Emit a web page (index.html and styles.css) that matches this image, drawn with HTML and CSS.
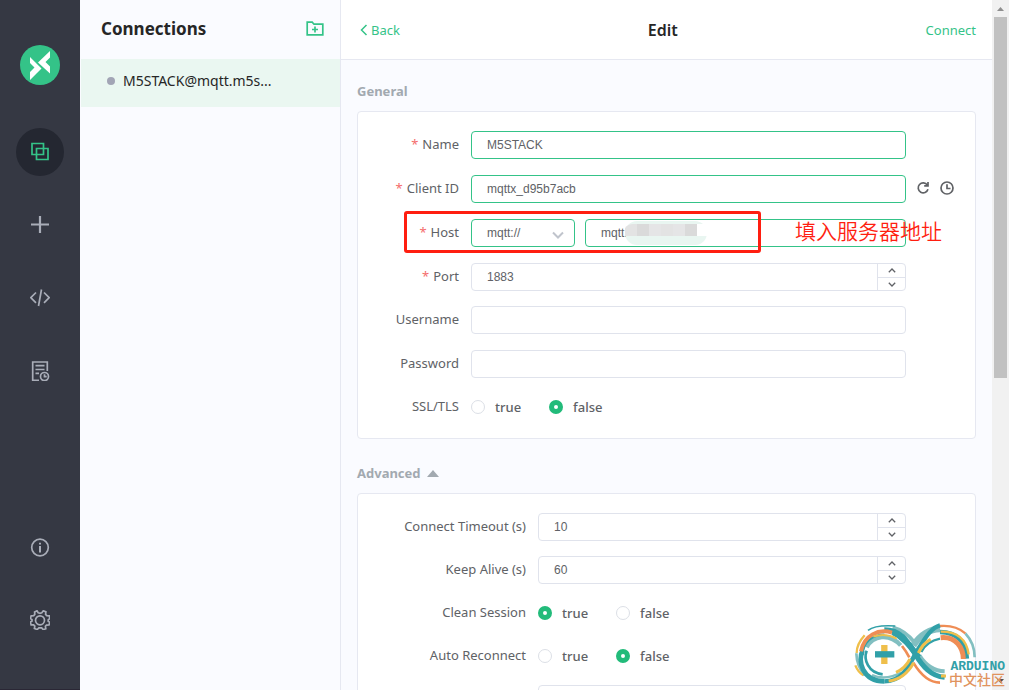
FILE: index.html
```html
<!DOCTYPE html>
<html lang="en">
<head>
<meta charset="utf-8">
<title>Edit connection</title>
<link rel="stylesheet" href="styles.css">
</head>
<body>
<div class="app">
  <nav class="rail" aria-label="Main">
    <svg class="logo" viewBox="0 0 40 40" aria-hidden="true"><circle cx="20" cy="20" r="20" fill="#34c388"/><path d="M10 12 21.500 23.500 10 35V27L14.500 22.500 10 18zM30 6 18 17.500 30 28.500V21.500L25.500 17 30 12.500z" fill="#fff"/></svg>
    <a class="rail-item active" href="#connections" aria-label="Connections"><svg viewBox="0 0 20 20"><path d="M2 1.500h11.500v11H2zM6.500 6.500H18v11H6.500z"/></svg></a>
    <a class="rail-item" href="#new" aria-label="New"><svg viewBox="0 0 20 20"><path d="M10 1v17M1 9.500h18" stroke-width="2.200"/></svg></a>
    <a class="rail-item" href="#script" aria-label="Script"><svg viewBox="0 0 20 20"><path d="M6 4.500.8 9.700 6 14.900M14 4.500l5.200 5.200L14 14.900M11.500 1.500 8.500 18"/></svg></a>
    <a class="rail-item" href="#log" aria-label="Log"><svg viewBox="0 0 20 20"><path d="M17.300 10V1H2.700v18.300H9M5.500 4.700h9M5.500 8.500h9M5.500 12.300H9"/><circle cx="14.500" cy="15.500" r="4"/><path d="M14.500 13.200v2.500h2.200"/></svg></a>
    <a class="rail-item push" href="#about" aria-label="About"><svg viewBox="0 0 20 20"><circle cx="10" cy="10.500" r="8.300"/><path d="M10 9V15.500M10 5.700v1.800" stroke-width="2"/></svg></a>
    <a class="rail-item" href="#settings" aria-label="Settings"><svg viewBox="0 0 20 20"><circle cx="10" cy="10.300" r="4.500"/><path d="M8.2 2.800 10 3.400l1.800-.6L13.300.8l2.600 1.100-.3 2.500 1.200 1.300 2.500.2.500 2.600-1.600 1.300v1.400l1.600 1.200-.8 2.600-2.500.1-1.100 1.200.4 2.400-2.500 1-1.600-1.800h-2.800L7.200 19.500l-2.800-1 .4-2.400-1.200-1.200-2.500-.1-.8-2.600 1.700-1.200V9.600L.4 8.400l.8-2.600 2.500-.2 1.100-1.200-.2-2.500L7 .8z"/></svg></a>
  </nav>

  <aside class="connections">
    <header class="bar">
      <h1>Connections</h1>
      <button class="plain" type="button" aria-label="New group"><svg class="folder" viewBox="0 0 18 16"><path d="M1.200 13.800V1.200h5l1.800 2h8.800v10.600zM9 5.500v6M6 8.500h6"/></svg></button>
    </header>
    <a class="connection" href="#m5stack"><span class="dot"></span><span>M5STACK@mqtt.m5s...</span></a>
  </aside>

  <main class="editor">
    <header class="bar editor-bar">
      <a class="back" href="#back"><svg viewBox="0 0 8 12"><path d="M6.500 1 1.500 6l5 5"/></svg>Back</a>
      <h2>Edit</h2>
      <button class="plain connect" type="button">Connect</button>
    </header>
    <form class="content">
      <h3>General</h3>
      <section class="card">
        <div class="row text-row">
          <label class="required" for="name">Name</label>
          <input class="box valid" id="name" value="M5STACK">
        </div>
        <div class="row text-row">
          <label class="required" for="client">Client ID</label>
          <input class="box valid" id="client" value="mqttx_d95b7acb">
          <div class="tools">
            <button class="plain" type="button" aria-label="Refresh"><svg viewBox="0 0 14 14"><path d="M11.300 4A5 5 0 1 0 12 8.300M12 1v3.800H8.200"/></svg></button>
            <button class="plain" type="button" aria-label="Timestamp"><svg viewBox="0 0 14 14"><circle cx="7" cy="7" r="6"/><path d="M7 3.200V7.500h3.500"/></svg></button>
          </div>
        </div>
        <div class="row text-row">
          <label class="required" for="host">Host</label>
          <div class="host">
            <div class="select">
              <select class="box valid" aria-label="Protocol"><option>mqtt://</option></select>
              <svg viewBox="0 0 12 8"><path d="M1 1.500 6 6.500l5-5"/></svg>
            </div>
            <div class="address">
              <input class="box valid" id="host" value="mqtt.">
              <svg class="mask" viewBox="0 0 82 24" aria-hidden="true"><rect width="82" height="24" rx="12" fill="#e9f6f1"/><path d="M72 3h10v12H72z" fill="#fff"/><path d="M0 14V7Q3 3 8 3h64v12H0z" fill="#e3e3e3"/><path d="M12 3h12v12H12zM60 3h12v12H60z" fill="#dadada"/><path d="M24 3h12v12H24zM48 3h12v12H48z" fill="#e5e5e6"/></svg>
            </div>
          </div>
          <div class="frame"></div>
          <p class="note" lang="zh">填入服务器地址</p>
        </div>
        <div class="row">
          <label class="required" for="port">Port</label>
          <div class="number"><input class="box" id="port" inputmode="numeric" value="1883"><div class="steps"><button type="button" aria-label="Increase"><svg viewBox="0 0 8 5"><path d="M.8 4.200 4 1l3.200 3.200"/></svg></button><button type="button" aria-label="Decrease"><svg viewBox="0 0 8 5"><path d="M.8.8 4 4 7.200.8"/></svg></button></div></div>
        </div>
        <div class="row text-row">
          <label for="user">Username</label>
          <input class="box" id="user">
        </div>
        <div class="row">
          <label for="pass">Password</label>
          <input class="box" id="pass" type="password">
        </div>
        <div class="row">
          <span class="label">SSL/TLS</span>
          <div class="radios"><label><input type="radio" name="ssl">true</label><label><input type="radio" name="ssl" checked>false</label></div>
        </div>
      </section>

      <h3>Advanced <svg class="caret" viewBox="0 0 12 7"><path d="M6 0 12 7H0z"/></svg></h3>
      <section class="card advanced">
        <div class="row">
          <label for="timeout">Connect Timeout (s)</label>
          <div class="number"><input class="box" id="timeout" inputmode="numeric" value="10"><div class="steps"><button type="button" aria-label="Increase"><svg viewBox="0 0 8 5"><path d="M.8 4.200 4 1l3.200 3.200"/></svg></button><button type="button" aria-label="Decrease"><svg viewBox="0 0 8 5"><path d="M.8.8 4 4 7.200.8"/></svg></button></div></div>
        </div>
        <div class="row">
          <label for="alive">Keep Alive (s)</label>
          <div class="number"><input class="box" id="alive" inputmode="numeric" value="60"><div class="steps"><button type="button" aria-label="Increase"><svg viewBox="0 0 8 5"><path d="M.8 4.200 4 1l3.200 3.200"/></svg></button><button type="button" aria-label="Decrease"><svg viewBox="0 0 8 5"><path d="M.8.8 4 4 7.200.8"/></svg></button></div></div>
        </div>
        <div class="row">
          <span class="label">Clean Session</span>
          <div class="radios"><label><input type="radio" name="clean" checked>true</label><label><input type="radio" name="clean">false</label></div>
        </div>
        <div class="row">
          <span class="label">Auto Reconnect</span>
          <div class="radios"><label><input type="radio" name="auto">true</label><label><input type="radio" name="auto" checked>false</label></div>
        </div>
        <div class="row">
          <span class="label"></span>
          <input class="box" aria-label="Version">
        </div>
      </section>
    </form>
  </main>

  <div class="scrollbar" aria-hidden="true">
    <svg viewBox="0 0 7 4"><path d="M3.500 0 7 4H0z" fill="#8f8f8f"/></svg>
    <div class="track"><div class="thumb"></div></div>
    <svg viewBox="0 0 7 4"><path d="M0 0h7L3.500 4z" fill="#505050"/></svg>
  </div>
</div>

<div class="watermark">
  <svg viewBox="0 0 459 204" fill="none" aria-hidden="true">
    <g stroke="#82bfc1">
      <path d="M13 100Q14 138 38 166" stroke-width="8"/>
      <path d="M44 82C62 46 112 38 146 76" stroke-width="13"/>
      <path d="M60 165Q100 183 150 157" stroke-width="7"/>
      <path d="M122 22Q160 32 188 68" stroke-width="11"/>
      <path d="M184 76Q218 27 264 27" stroke-width="20"/>
      <path d="M202 106Q232 153 278 154" stroke-width="12"/>
      <path d="M340 40Q368 70 368 112" stroke-width="8"/>
    </g>
    <path d="M38 46Q14 72 14 99M10 136Q18 156 34 166" stroke="#efbf4b" stroke-width="7"/>
    <path d="M184 128Q220 188 264 188M150 78Q164 96 172 112" stroke="#ef8d55" stroke-width="8"/>
    <path d="M264 18Q310 14 340 40" stroke="#ef8d55" stroke-width="7"/>
    <g stroke="#31a0a8">
      <path d="M48 31Q70 14 130 18" stroke-width="5"/>
      <path d="M97 29C150 29 168 67 190 103S236 168 278 172" stroke-width="15"/>
      <path d="M122 36C158 52 178 83 200 112" stroke-width="18"/>
      <path d="M97 184C159 184 176 122 198 88S236 24 264 16" stroke-width="13"/>
      <path d="M97 184C30 184 16 121 32 91" stroke-width="14"/>
      <path d="M32 106C32 66 62 44 97 44" stroke-width="7"/>
      <path d="M44 92C34 118 48 158 92 163" stroke-width="8"/>
      <path d="M264 36Q340 38 345 116" stroke-width="13"/>
      <path d="M208 96Q224 64 264 56" stroke-width="7"/>
    </g>
    <path d="M27 94C36 46 79 25 120 38" stroke="#ef8d55" stroke-width="12"/>
    <path d="M64 50Q100 38 134 56" stroke="#efbf4b" stroke-width="6"/>
    <path d="M110 183Q158 177 185 128M132 157Q160 145 174 117M199 99Q213 69 236 58M267 168h15" stroke="#efbf4b" stroke-width="9"/>
    <path d="M266 35Q340 34 350 103" stroke="#efbf4b" stroke-width="7"/>
    <path d="M266 53C312 48 334 85 334 117" stroke="#ef8d55" stroke-width="15"/>
    <path d="M97 75v57" stroke="#efbf4b" stroke-width="19"/>
    <path d="M69 103h58" stroke="#31a0a8" stroke-width="19"/>
  </svg>
  <div class="watermark-text"><strong>ARDUINO</strong><span lang="zh">中文社区</span></div>
</div>
</body>
</html>
```

FILE: styles.css
```css
* { box-sizing: border-box; }
body {
  margin: 0;
  font: 13px/20px "Noto Sans", "Open Sans", sans-serif;
  color: #606266;
  background: #fafbff;
}
svg { display: block; }
a { text-decoration: none; color: inherit; }
h1, h2, h3, p { margin: 0; }
.app { display: flex; height: 100vh; overflow: hidden; }
.plain { border: 0; padding: 0; background: none; color: inherit; font: inherit; cursor: pointer; }

.rail {
  flex: none;
  width: 80px;
  display: flex;
  flex-direction: column;
  align-items: center;
  gap: 25px;
  padding: 45px 0;
  background: #353843;
  border-bottom: 1px solid #2a2735;
}
.logo { width: 40px; height: 40px; margin-bottom: 18px; }
.rail-item { display: grid; place-items: center; width: 48px; height: 48px; border-radius: 50%; color: #a9adb8; }
.rail-item svg { width: 20px; height: 20px; fill: none; stroke: currentColor; stroke-width: 1.7; }
.rail-item.active { background: #242731; color: #34c388; }
.push { margin-top: auto; }

.connections { flex: none; width: 261px; border-right: 1px solid #e6e8f1; }
.bar { display: flex; align-items: center; justify-content: space-between; height: 59px; padding: 0 16px 2px 21px; }
h1 { font-size: 17px; font-weight: 700; color: #262626; }
.bar .plain, .back { color: #34c388; }
.folder { width: 18px; height: 16px; fill: none; stroke: currentColor; stroke-width: 1.7; }
.connection { display: flex; align-items: center; gap: 8px; height: 48px; padding: 0 26px 4px; margin-left: 1px; background: #eaf7f1; color: #262626; font-size: 14px; }
.dot { width: 8px; height: 8px; border-radius: 50%; background: #a2a5b5; }

.editor { flex: 1; min-width: 0; overflow: hidden; }
.editor-bar { height: 60px; padding: 0 16px; background: #fff; border-bottom: 1px solid #e6e8f1; }
h2 { font-size: 16px; font-weight: 600; color: #262626; }
.back { display: flex; align-items: center; gap: 3px; padding-left: 3px; }
.back svg { width: 8px; height: 12px; fill: none; stroke: currentColor; stroke-width: 1.5; }

.content { padding: 21px 16px 0; }
h3 { display: flex; align-items: center; gap: 6px; margin-bottom: 10px; font-size: 13px; font-weight: 700; color: #a2a9b0; }
.caret { width: 12px; height: 7px; fill: currentColor; }
.card { padding: 19px 0 2px; margin-bottom: 24px; background: #fff; border: 1px solid #e6e8f1; border-radius: 4px; }
.row { position: relative; display: grid; grid-template-columns: 101px 1fr 57px; column-gap: 12px; margin-bottom: 15px; }
.text-row { margin-bottom: 16px; }
.advanced .row { grid-template-columns: 168px 1fr 57px; }
.row > label, .label { line-height: 26px; text-align: right; white-space: nowrap; }
.required::before { content: "*"; margin-right: 4px; color: #f56c6c; }

.box {
  display: block;
  width: 100%;
  height: 28px;
  padding: 0 15px;
  border: 1px solid #e0e3ec;
  border-radius: 4px;
  background: #fff;
  color: #606266;
  font: 12px "Liberation Sans", Arial, sans-serif;
  outline: 0;
  appearance: none;
}
.valid { border-color: #34c388; }
.tools { display: flex; align-items: center; gap: 10px; padding-bottom: 3px; margin-left: -2px; }
.tools svg { width: 14px; height: 14px; fill: none; stroke: #606266; stroke-width: 1.7; }
.host { display: grid; grid-template-columns: 104px 1fr; gap: 10px; }
.select, .address, .number { position: relative; }
.select svg { position: absolute; right: 11px; top: 12px; width: 12px; height: 8px; fill: none; stroke: #c0c4cc; stroke-width: 2; pointer-events: none; }
.mask { position: absolute; left: 40px; top: 2px; width: 82px; height: 24px; }
.steps { position: absolute; top: 1px; right: 1px; bottom: 1px; width: 28px; display: grid; grid-template-rows: 1fr 1fr; border-left: 1px solid #e0e3ec; }
.steps button { display: grid; place-items: center; border: 0; padding: 0; background: none; }
.steps button + button { border-top: 1px solid #e0e3ec; }
.steps svg { width: 8px; height: 5px; fill: none; stroke: #606266; stroke-width: 1.3; }

.radios { display: flex; align-items: center; gap: 28px; height: 28px; font-weight: 500; }
.radios label { display: flex; align-items: center; gap: 10px; }
.radios input { appearance: none; width: 14px; height: 14px; margin: 0; border: 1px solid #dcdfe6; border-radius: 50%; background: #fff; }
.radios input:checked { border: 5px solid #22bb7a; }

.frame { position: absolute; left: 46px; top: -8px; width: 357px; height: 42px; border: 3px solid #ff1e10; border-radius: 3px; }
.note { position: absolute; left: 437px; top: -3px; color: #ff1e10; font: 350 21px/28px "Noto Sans CJK SC", sans-serif; white-space: nowrap; }

.scrollbar { flex: none; width: 17px; display: flex; flex-direction: column; align-items: center; padding: 7px 0; background: #f1f1f1; }
.scrollbar svg { width: 7px; height: 4px; }
.track { flex: 1; align-self: stretch; padding: 6px 2px; }
.thumb { height: 55%; background: #c1c1c1; }

.watermark { position: absolute; right: 4px; bottom: 2px; width: 153px; height: 68px; }
.watermark > svg { width: 153px; height: 68px; }
.watermark-text { position: absolute; right: 0; bottom: 2px; display: flex; flex-direction: column; align-items: flex-end; color: #e0935e; font: 500 14px/13px "Noto Sans CJK SC", sans-serif; }
.watermark-text strong { color: #31a0a8; font: 700 13px/13px "Liberation Mono", monospace; }
```
